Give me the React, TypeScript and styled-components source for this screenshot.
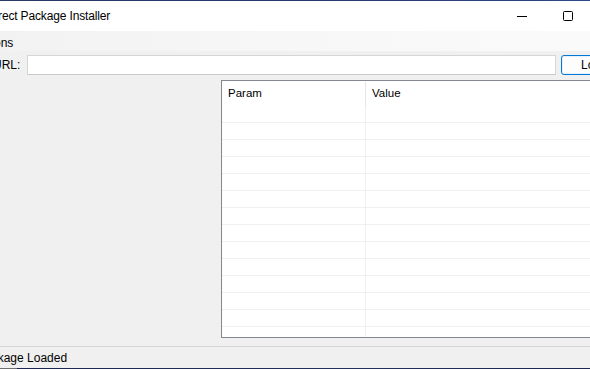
import React from "react";
import styled, { createGlobalStyle } from "styled-components";

const Global = createGlobalStyle`
  html, body { margin: 0; padding: 0; overflow: hidden; background: #1f2b4d; }
  * { box-sizing: border-box; }
`;

const FONT = `"Liberation Sans", Arial, sans-serif`;

const Screen = styled.div`
  width: 590px;
  height: 369px;
  overflow: hidden;
  display: flex;
  flex-direction: column;
  font-family: ${FONT};
  font-size: 12px;
  color: #000;
  background: #f0f0f0;
`;

const DesktopEdge = styled.div<{ $h: number }>`
  height: ${(p) => p.$h}px;
  flex: none;
  background: linear-gradient(90deg, #6f6f6f 0 17px, #1c2650 17px, #24305c 60%, #1c2650);
`;

const TopEdge = styled.div`
  height: 1px;
  flex: none;
  background: linear-gradient(90deg, #2a3a66, #24386e 50%, #2c4a86);
`;

const TitleBar = styled.div`
  height: 30px;
  flex: none;
  background: #ffffff;
  display: flex;
  align-items: center;
`;

const Title = styled.span`
  margin-left: -13px;
  font-size: 12px;
  letter-spacing: -0.15px;
  white-space: nowrap;
`;

const Controls = styled.div`
  margin-left: auto;
  margin-right: -47px;
  display: flex;
  height: 100%;
`;

const CtrlButton = styled.div`
  width: 46px;
  height: 100%;
  display: flex;
  align-items: center;
  justify-content: center;
`;

const MinGlyph = styled.div`
  width: 10px;
  height: 1px;
  background: #000;
`;

const MaxGlyph = styled.div`
  width: 10px;
  height: 10px;
  border: 1px solid #000;
  border-radius: 1.5px;
`;

const MenuBar = styled.div`
  height: 20px;
  flex: none;
  background: linear-gradient(90deg, #f2f2f2, #f8f8f8 60%, #fafafa);
  display: flex;
  align-items: center;
`;

const MenuItem = styled.span`
  margin-left: -28px;
  white-space: nowrap;
  padding-top: 3px;
`;

const UrlRow = styled.div`
  margin-top: 4px;
  height: 20px;
  flex: none;
  display: flex;
  align-items: center;
`;

const UrlLabel = styled.span`
  margin-left: -57px;
  white-space: nowrap;
  flex: none;
`;

const UrlInput = styled.div`
  margin-left: 7px;
  width: 529px;
  height: 20px;
  flex: none;
  background: #fff;
  border: 1px solid #d6d6d6;
  border-bottom-color: #c9c9c9;
`;

const LoadButton = styled.div`
  margin-left: 5px;
  width: 66px;
  height: 20px;
  flex: none;
  border: 1px solid #0078d7;
  border-radius: 3px;
  background: #fdfdfd;
  display: flex;
  align-items: center;
  justify-content: center;
  box-shadow: inset 0 0 0 1px #e5f1fb;
`;

const Body = styled.div`
  margin-top: 5px;
  display: flex;
  flex: none;
  height: 258px;
`;

const LeftPane = styled.div`
  width: 221px;
  flex: none;
`;

const Grid = styled.div`
  flex: none;
  width: 400px;
  height: 258px;
  background: #fff;
  border: 1px solid #828790;
  border-right: none;
  overflow: hidden;
`;

const HeaderRow = styled.div`
  display: grid;
  grid-template-columns: 144px 1fr;
  height: 25px;
`;

const HeaderCell = styled.div<{ $divider?: boolean }>`
  padding-left: 6px;
  display: flex;
  align-items: center;
  font-size: 11.5px;
  padding-bottom: 2px;
  border-right: ${(p) => (p.$divider ? "1px solid #e5e5e5" : "none")};
  margin: 1px 0 0;
`;

const Row = styled.div`
  display: grid;
  grid-template-columns: 144px 1fr;
  height: 17px;
  border-bottom: 1px solid #f0f0f0;
`;

const Cell = styled.div<{ $divider?: boolean }>`
  border-right: ${(p) => (p.$divider ? "1px solid #f0f0f0" : "none")};
`;

const Gap = styled.div`
  height: 8px;
  flex: none;
`;

const StatusBar = styled.div`
  flex: none;
  height: 22px;
  border-top: 1px solid #d7d7d7;
  background: #f0f0f0;
  display: flex;
  align-items: center;
`;

const StatusText = styled.span`
  margin-left: -23px;
  white-space: nowrap;
  padding-top: 1px;
`;

const rows = Array.from({ length: 14 });

export default function App() {
  return (
    <>
      <Global />
      <Screen>
        <TopEdge />
        <TitleBar>
          <Title>Direct Package Installer</Title>
          <Controls>
            <CtrlButton>
              <MinGlyph />
            </CtrlButton>
            <CtrlButton>
              <MaxGlyph />
            </CtrlButton>
            <CtrlButton />
          </Controls>
        </TitleBar>
        <MenuBar>
          <MenuItem>Options</MenuItem>
        </MenuBar>
        <UrlRow>
          <UrlLabel>Package URL:</UrlLabel>
          <UrlInput />
          <LoadButton>Load</LoadButton>
        </UrlRow>
        <Body>
          <LeftPane />
          <Grid>
            <HeaderRow>
              <HeaderCell $divider>Param</HeaderCell>
              <HeaderCell>Value</HeaderCell>
            </HeaderRow>
            {rows.map((_, i) => (
              <Row key={i}>
                <Cell $divider />
                <Cell />
              </Row>
            ))}
          </Grid>
        </Body>
        <Gap />
        <StatusBar>
          <StatusText>Package Loaded</StatusText>
        </StatusBar>
        <DesktopEdge $h={1} />
      </Screen>
    </>
  );
}
